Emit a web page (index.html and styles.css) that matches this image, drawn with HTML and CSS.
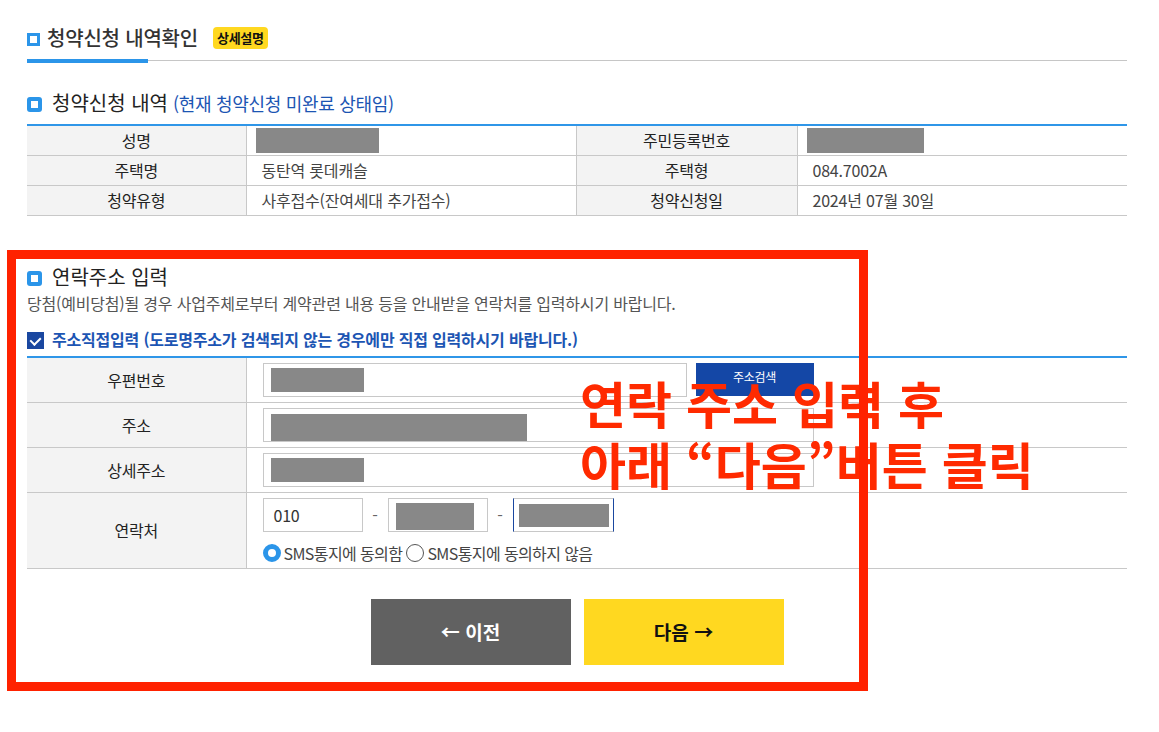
FILE: index.html
```html
<!DOCTYPE html>
<html lang="ko">
<head>
  <meta charset="UTF-8" />
  <meta name="viewport" content="width=device-width, initial-scale=1.0" />
  <title>청약신청 내역확인</title>
  <link rel="stylesheet" href="styles.css">
</head>
<body>
  <div class="page">
    <div class="page-head">
      <span class="icon-box"></span>
      <h1>청약신청 내역확인</h1>
      <span class="badge">상세설명</span>
    </div>

    <h2 class="sec-title"><span class="icon-round"></span>청약신청 내역 <em>(현재 청약신청 미완료 상태임)</em></h2>
    <table class="info">
      <colgroup><col style="width:219px"><col style="width:330px"><col style="width:221px"><col></colgroup>
      <tr>
        <th>성명</th><td><span class="mask m-name"></span></td>
        <th>주민등록번호</th><td><span class="mask m-id"></span></td>
      </tr>
      <tr>
        <th>주택명</th><td>동탄역 롯데캐슬</td>
        <th>주택형</th><td>084.7002A</td>
      </tr>
      <tr>
        <th>청약유형</th><td>사후접수(잔여세대 추가접수)</td>
        <th>청약신청일</th><td>2024년 07월 30일</td>
      </tr>
    </table>

    <h2 class="sec-title contact"><span class="icon-round"></span>연락주소 입력</h2>
    <p class="desc">당첨(예비당첨)될 경우 사업주체로부터 계약관련 내용 등을 안내받을 연락처를 입력하시기 바랍니다.</p>
    <label class="check"><span class="check-box"></span>주소직접입력 (도로명주소가 검색되지 않는 경우에만 직접 입력하시기 바랍니다.)</label>

    <table class="form">
      <colgroup><col style="width:219px"><col></colgroup>
      <tr>
        <th>우편번호</th>
        <td>
          <div class="line">
            <div class="field f-zip"><span class="mask m-short"></span></div>
            <button class="btn-search">주소검색</button>
          </div>
        </td>
      </tr>
      <tr>
        <th>주소</th>
        <td><div class="field f-wide"><span class="mask m-long"></span></div></td>
      </tr>
      <tr>
        <th>상세주소</th>
        <td><div class="field f-wide"><span class="mask m-short"></span></div></td>
      </tr>
      <tr class="tall">
        <th>연락처</th>
        <td>
          <div class="line">
            <div class="field f-tel">010</div>
            <span class="dash">-</span>
            <div class="field f-tel"><span class="mask m-tel"></span></div>
            <span class="dash">-</span>
            <div class="field f-tel focus"><span class="mask m-tel2"></span></div>
          </div>
          <div class="radios">
            <span class="radio on"></span>SMS통지에 동의함
            <span class="radio"></span>SMS통지에 동의하지 않음
          </div>
        </td>
      </tr>
    </table>

    <div class="actions">
      <button class="btn-prev">← 이전</button>
      <button class="btn-next">다음 →</button>
    </div>

    <div class="mark-text">연락 주소 입력 후<br>아래 “다음”버튼 클릭</div>
    <div class="mark-box"></div>
  </div>
</body>
</html>
```

FILE: styles.css
```css
* { box-sizing: border-box; }
body {
  margin: 0;
  font-family: "Noto Sans CJK KR", "Noto Sans", sans-serif;
  color: #333;
  background: #fff;
}
.page {
  position: relative;
  width: 1159px;
  padding: 0 32px 40px 27px;
}

/* page head */
.page-head {
  position: relative;
  display: flex;
  align-items: center;
  height: 61px;
  padding: 24px 0 9px;
  border-bottom: 1px solid #c6c6c6;
}
.page-head::after {
  content: "";
  position: absolute;
  left: 0;
  bottom: -3px;
  width: 121px;
  height: 4px;
  background: #2b95e9;
}
.icon-box {
  width: 13px;
  height: 13px;
  border: 3px solid #2b95e9;
  margin: 3px 7px 0 0;
}
.page-head h1 {
  margin: 0;
  font-size: 20px;
  font-weight: 500;
  color: #333;
  line-height: 28px;
  letter-spacing: -0.2px;
}
.badge {
  margin-left: 15px;
  padding: 0 4px;
  height: 22px;
  line-height: 22px;
  border-radius: 4px;
  background: #ffd820;
  font-size: 13px;
  font-weight: 700;
  color: #111;
  letter-spacing: -0.3px;
}

/* section titles */
.sec-title {
  display: flex;
  align-items: center;
  margin: 30px 0 9px;
  font-size: 20px;
  font-weight: 400;
  line-height: 24px;
  color: #222;
}
.sec-title em {
  font-style: normal;
  font-size: 18px;
  color: #1c55b3;
  margin-left: 5px;
  letter-spacing: -0.3px;
}
.icon-round {
  position: relative;
  width: 15px;
  height: 15px;
  border-radius: 3px;
  background: #2b95e9;
  margin: 3px 10px 0 0;
}
.icon-round::after {
  content: "";
  position: absolute;
  left: 4px;
  top: 4px;
  width: 7px;
  height: 7px;
  background: #fff;
}
.sec-title.contact { margin: 49px 0 4px; }

/* info table */
table {
  width: 100%;
  border-collapse: collapse;
  font-size: 16px;
  letter-spacing: -0.2px;
}
.info { border-top: 2px solid #2f96e8; }
.info th, .info td {
  height: 30px;
  padding: 0 15px;
  border-bottom: 1px solid #c8c8c8;
  border-right: 1px solid #c8c8c8;
}
.info tr > :last-child { border-right: none; }
th {
  background: #f3f3f3;
  font-weight: 400;
  color: #222;
  text-align: center;
}
td { color: #444; text-align: left; }
.mask {
  display: block;
  background: #888;
}
.info .mask { height: 25px; margin-left: -6px; }
.info .m-name { width: 123px; }
.info .m-id { width: 117px; }

/* contact */
.desc {
  margin: 0;
  font-size: 16px;
  letter-spacing: -0.2px;
  line-height: 20px;
  color: #555;
}
.check {
  display: flex;
  align-items: center;
  margin: 16px 0 7px;
  line-height: 20px;
  font-size: 16px;
  letter-spacing: -0.2px;
  font-weight: 700;
  color: #1c55b3;
}
.check-box {
  position: relative;
  width: 17px;
  height: 17px;
  background: #1a47a0;
  margin: 3px 8px 0 0;
}
.check-box::after {
  content: "";
  position: absolute;
  left: 5px;
  top: 3px;
  width: 5px;
  height: 8px;
  border: solid #fff;
  border-width: 0 2px 2px 0;
  transform: rotate(45deg);
}

.form { border-top: 2px solid #2f96e8; }
.form th, .form td {
  height: 45px;
  padding: 5px 16px;
  border-bottom: 1px solid #c8c8c8;
}
.form th { border-right: 1px solid #c8c8c8; }
.form tr.tall th, .form tr.tall td { height: 74px; }
.line {
  display: flex;
  align-items: center;
}
.field {
  height: 34px;
  border: 1px solid #c8c8c8;
  background: #fff;
  padding: 4px 7px;
  font-size: 16px;
  line-height: 24px;
  color: #333;
}
.f-zip { width: 424px; }
.f-wide { width: 551px; }
.f-tel { width: 100px; padding: 4px 10px; }
.f-tel.focus { width: 101px; border-left-color: #1a47a0; border-right-color: #1a47a0; padding: 5px 5px; }
.m-short { width: 93px; height: 24px; }
.m-long { width: 256px; height: 27px; margin-top: 1px; }
.m-tel { width: 78px; height: 27px; margin-left: -3px; }
.m-tel2 { width: 90px; height: 23px; }
.btn-search {
  margin-left: 9px;
  width: 118px;
  height: 33px;
  border: none;
  background: #1447a6;
  color: #fff;
  font-family: inherit;
  font-size: 12px;
  letter-spacing: -0.3px;
  padding: 0 0 6px;
}
.dash {
  width: 25px;
  text-align: center;
  color: #666;
  font-size: 16px;
}
.radios {
  display: flex;
  align-items: center;
  margin-top: 11px;
  line-height: 20px;
  font-size: 16px;
  letter-spacing: -0.6px;
  color: #444;
}
.radio {
  width: 18px;
  height: 18px;
  border-radius: 50%;
  border: 1px solid #555;
  margin-right: 3px;
}
.radios .radio:not(.on) { margin-left: 4px; }
.radio.on { border: 5px solid #2b95e9; }

/* buttons */
.actions {
  display: flex;
  justify-content: center;
  gap: 13px;
  margin-top: 30px;
}
.actions button {
  width: 200px;
  height: 66px;
  border: none;
  font-family: inherit;
  font-size: 19px;
  font-weight: 700;
}
.btn-prev { background: #616161; color: #fff; }
.btn-next { background: #ffd820; color: #111; }

/* annotation */
.mark-box {
  position: absolute;
  left: 7px;
  top: 250px;
  width: 861px;
  height: 441px;
  border: 9px solid #ff2200;
}
.mark-text {
  position: absolute;
  left: 580px;
  top: 372px;
  font-size: 50px;
  font-weight: 700;
  line-height: 61px;
  color: #ff2a00;
  white-space: nowrap;
}
```
